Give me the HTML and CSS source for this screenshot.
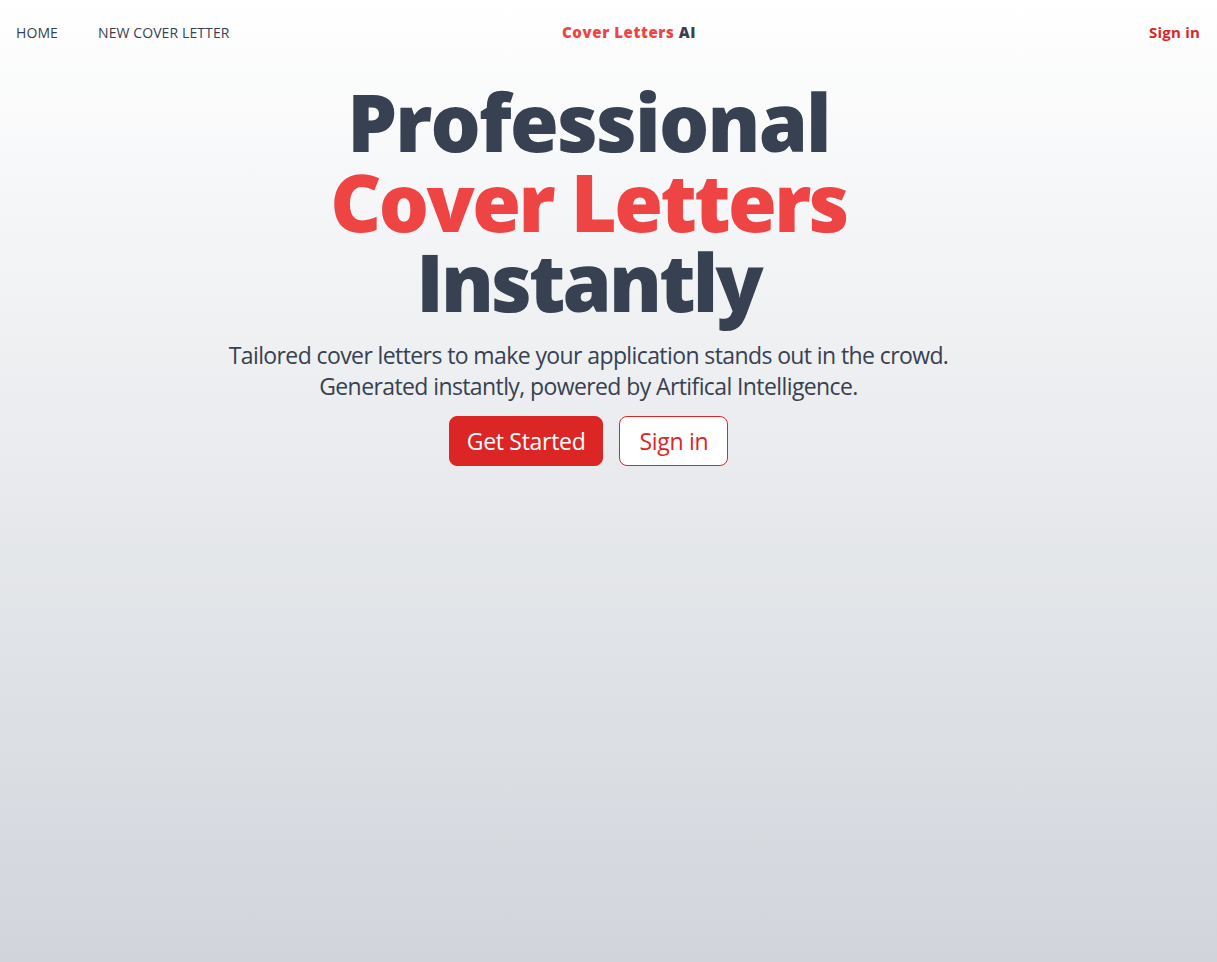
FILE: index.html
```html
<!DOCTYPE html>
<html lang="en">
<head>
<meta charset="utf-8">
<title>Cover Letters AI</title>
<link rel="stylesheet" href="styles.css">
</head>
<body>
<div class="page">
  <header class="nav">
    <nav class="nav-links">
      <a class="nav-link" href="#">Home</a>
      <a class="nav-link" href="#">New Cover Letter</a>
    </nav>
    <a class="logo" href="#"><span class="logo-red">Cover Letters</span> AI</a>
    <div class="nav-right">
      <a class="nav-signin" href="#">Sign in</a>
    </div>
  </header>
  <main class="hero">
    <h1 class="hero-title">
      <span class="line">Professional</span>
      <span class="line red">Cover Letters</span>
      <span class="line">Instantly</span>
    </h1>
    <p class="hero-sub">Tailored cover letters to make your application stands out in the crowd.<br>Generated instantly, powered by Artifical Intelligence.</p>
    <div class="actions">
      <a class="btn btn-primary" href="#">Get Started</a>
      <a class="btn btn-outline" href="#">Sign in</a>
    </div>
  </main>
</div>
</body>
</html>
```
FILE: styles.css
```css
* { box-sizing: border-box; }
html, body { margin: 0; padding: 0; height: 100%; }
body {
  font-family: "Open Sans", "Noto Sans", sans-serif;
  color: #374151;
}
a { text-decoration: none; color: inherit; }
.page {
  min-height: 100vh;
  background: linear-gradient(to bottom, #ffffff 0%, #d1d5db 100%);
}
.nav {
  height: 64px;
  padding: 0 17px 0 16px;
  display: grid;
  grid-template-columns: 546px auto 1fr;
  align-items: center;
}
.nav-links { display: flex; gap: 40px; }
.nav-link {
  font-size: 14px;
  font-weight: 400;
  text-transform: uppercase;
  color: #374151;
  letter-spacing: 0.1px;
}
.logo {
  font-size: 15px;
  font-weight: 800;
  color: #374151;
  letter-spacing: 0.6px;
}
.logo-red { color: #ef4444; }
.nav-right { text-align: right; }
.nav-signin {
  font-size: 15px;
  font-weight: 700;
  color: #dc2626;
  letter-spacing: 0.2px;
}
.hero {
  display: flex;
  flex-direction: column;
  align-items: center;
  text-align: center;
  padding-top: 18px;
  padding-right: 40px;
}
.hero-title {
  margin: 0;
  font-size: 79px;
  line-height: 80px;
  font-weight: 800;
  letter-spacing: -1.8px;
}
.hero-title .line { display: block; }
.hero-title .red { color: #ef4444; letter-spacing: -2.6px; }
.hero-title .line:last-child { letter-spacing: -2.8px; }
.hero-sub {
  margin: 18px 0 0;
  font-size: 23px;
  line-height: 31px;
  letter-spacing: -0.6px;
  color: #374151;
}
.actions {
  display: flex;
  gap: 16px;
  margin-top: 14px;
}
.btn {
  display: block;
  height: 50px;
  border-radius: 8px;
  font-size: 23px;
  line-height: 48px;
  padding: 0 17px;
  letter-spacing: -0.3px;
}
.btn-primary {
  background: #dc2626;
  color: #ffffff;
  border: 1px solid #dc2626;
}
.btn-outline {
  background: #ffffff;
  color: #dc2626;
  border: 1px solid #dc2626;
  padding: 0 19px;
}
```
